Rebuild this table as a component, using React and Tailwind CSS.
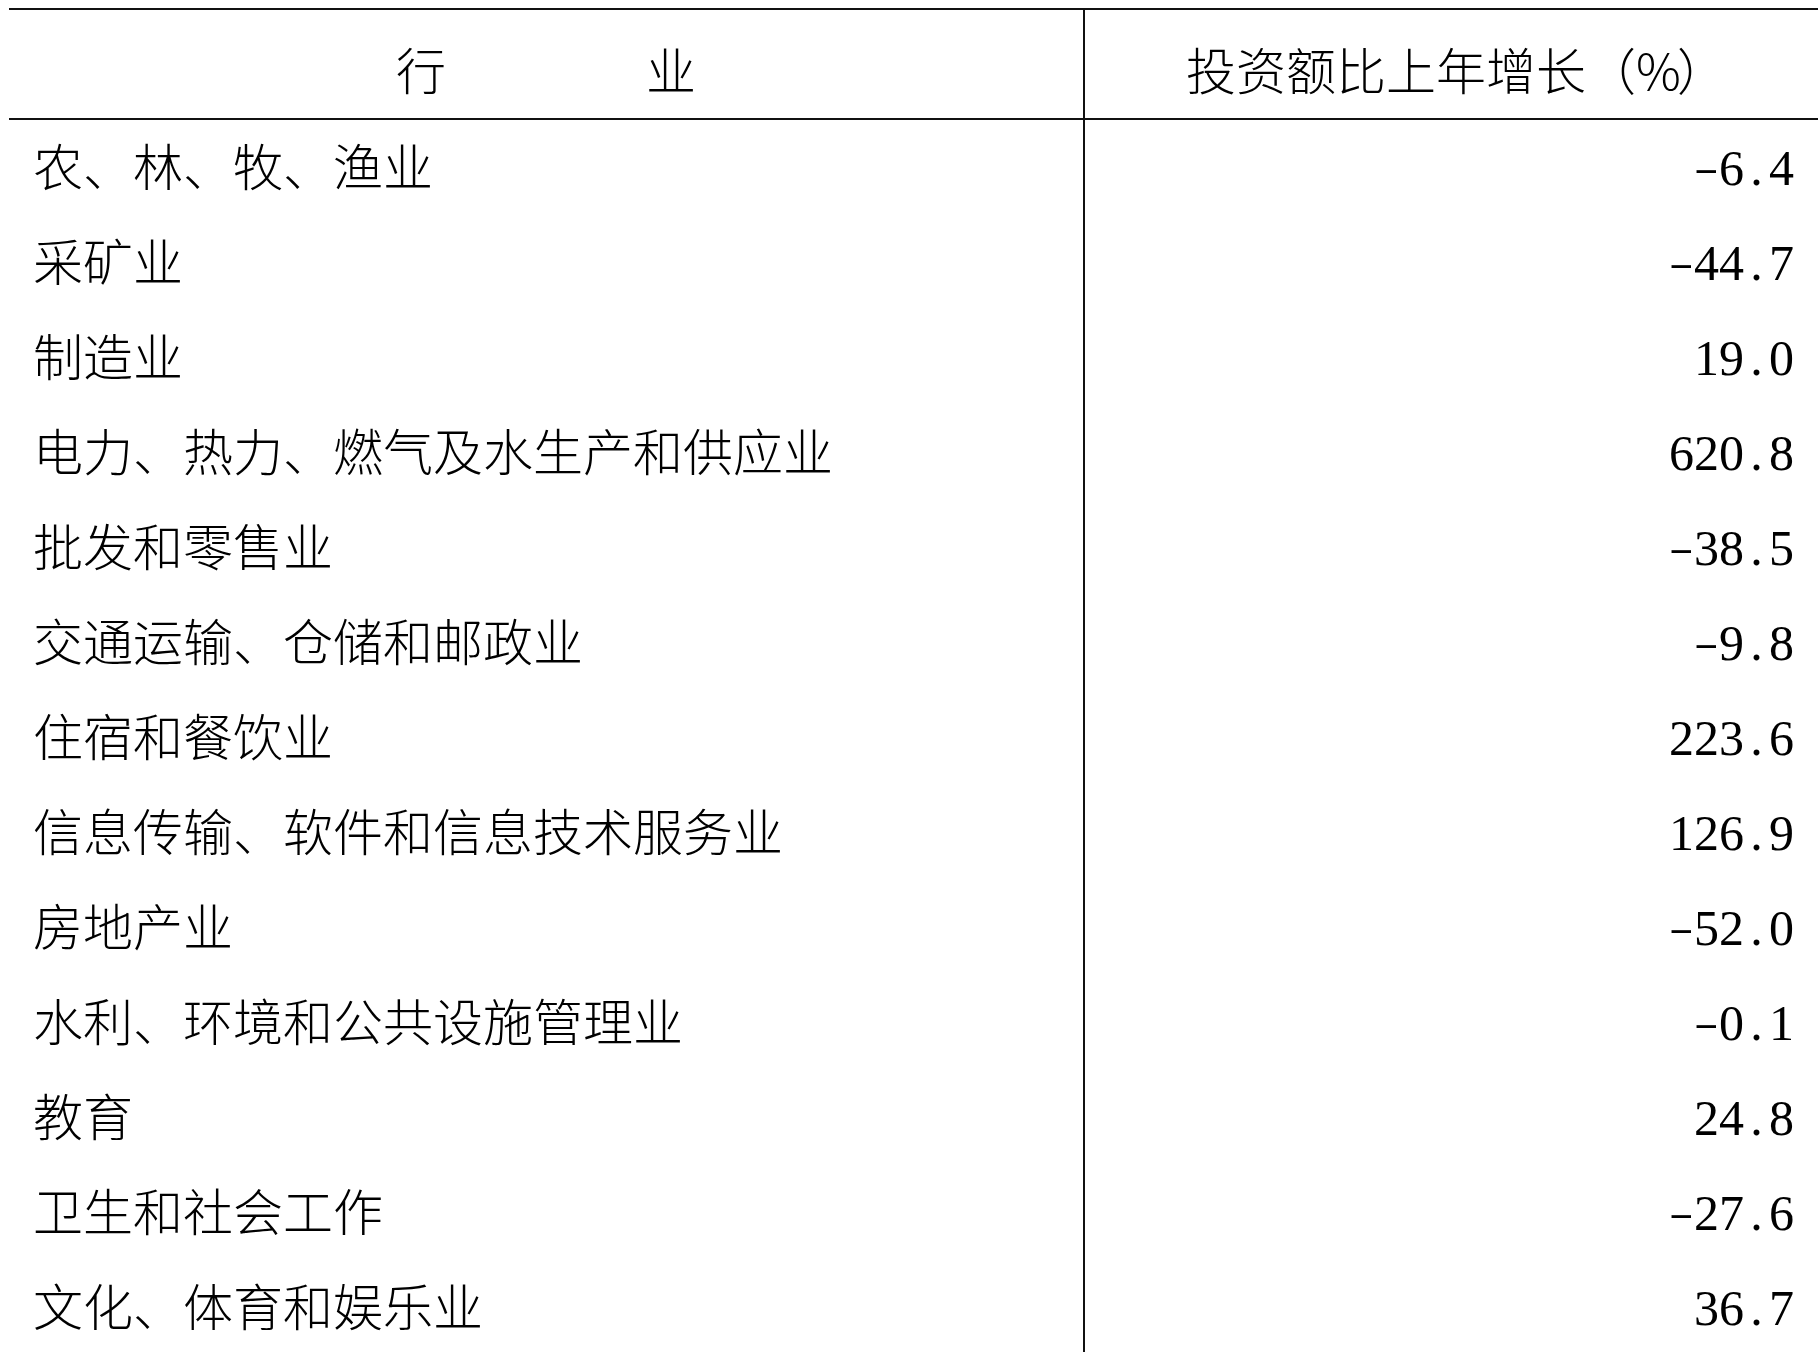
import React from "react";

const rows = [
  ["农、林、牧、渔业", "-6.4"],
  ["采矿业", "-44.7"],
  ["制造业", "19.0"],
  ["电力、热力、燃气及水生产和供应业", "620.8"],
  ["批发和零售业", "-38.5"],
  ["交通运输、仓储和邮政业", "-9.8"],
  ["住宿和餐饮业", "223.6"],
  ["信息传输、软件和信息技术服务业", "126.9"],
  ["房地产业", "-52.0"],
  ["水利、环境和公共设施管理业", "-0.1"],
  ["教育", "24.8"],
  ["卫生和社会工作", "-27.6"],
  ["文化、体育和娱乐业", "36.7"],
];

const cjk = "font-['Noto_Sans_CJK_SC',sans-serif] font-light";

// SimSun-style half-width figures: every character gets the same 25px slot
const Figure = ({ value }) => (
  <span className="font-['Liberation_Serif',serif] text-[50px] leading-[50px] text-black">
    {value.split("").map((ch, i) => (
      <span key={i} className="inline-block w-[25px] text-center">
        {ch === "-" ? <span className="inline-block scale-x-150 scale-y-75">-</span> : ch}
      </span>
    ))}
  </span>
);

export default function App() {
  return (
    <div className="h-[1352px] w-[1818px] overflow-hidden bg-white">
      <div className="ml-[9px] mt-[8px] w-[1809px]">
        {/* header */}
        <div className="flex h-[112px] border-y-2 border-[#111]">
          <div className="flex w-[1076px] items-start justify-center border-r-2 border-[#111] pt-[33px]">
            <span className={`${cjk} whitespace-pre text-[50px] leading-[50px] text-black`}>
              行　　　　业
            </span>
          </div>
          <div className="flex flex-1 items-start justify-center pt-[33px] pl-[10px]">
            <span className={`${cjk} whitespace-pre text-[50px] leading-[50px] text-black`}>
              投资额比上年增长（<span className="tracking-[-4px]">%</span>）
            </span>
          </div>
        </div>

        {/* body */}
        {rows.map(([name, value]) => (
          <div key={name} className="flex h-[95px]">
            <div className="flex w-[1076px] items-center border-r-2 border-[#111] pb-[8px] pl-[24px]">
              <span className={`${cjk} text-[50px] leading-[50px] text-black`}>{name}</span>
            </div>
            <div className="flex flex-1 items-center justify-end pr-[24px]">
              <Figure value={value} />
            </div>
          </div>
        ))}
      </div>
    </div>
  );
}
